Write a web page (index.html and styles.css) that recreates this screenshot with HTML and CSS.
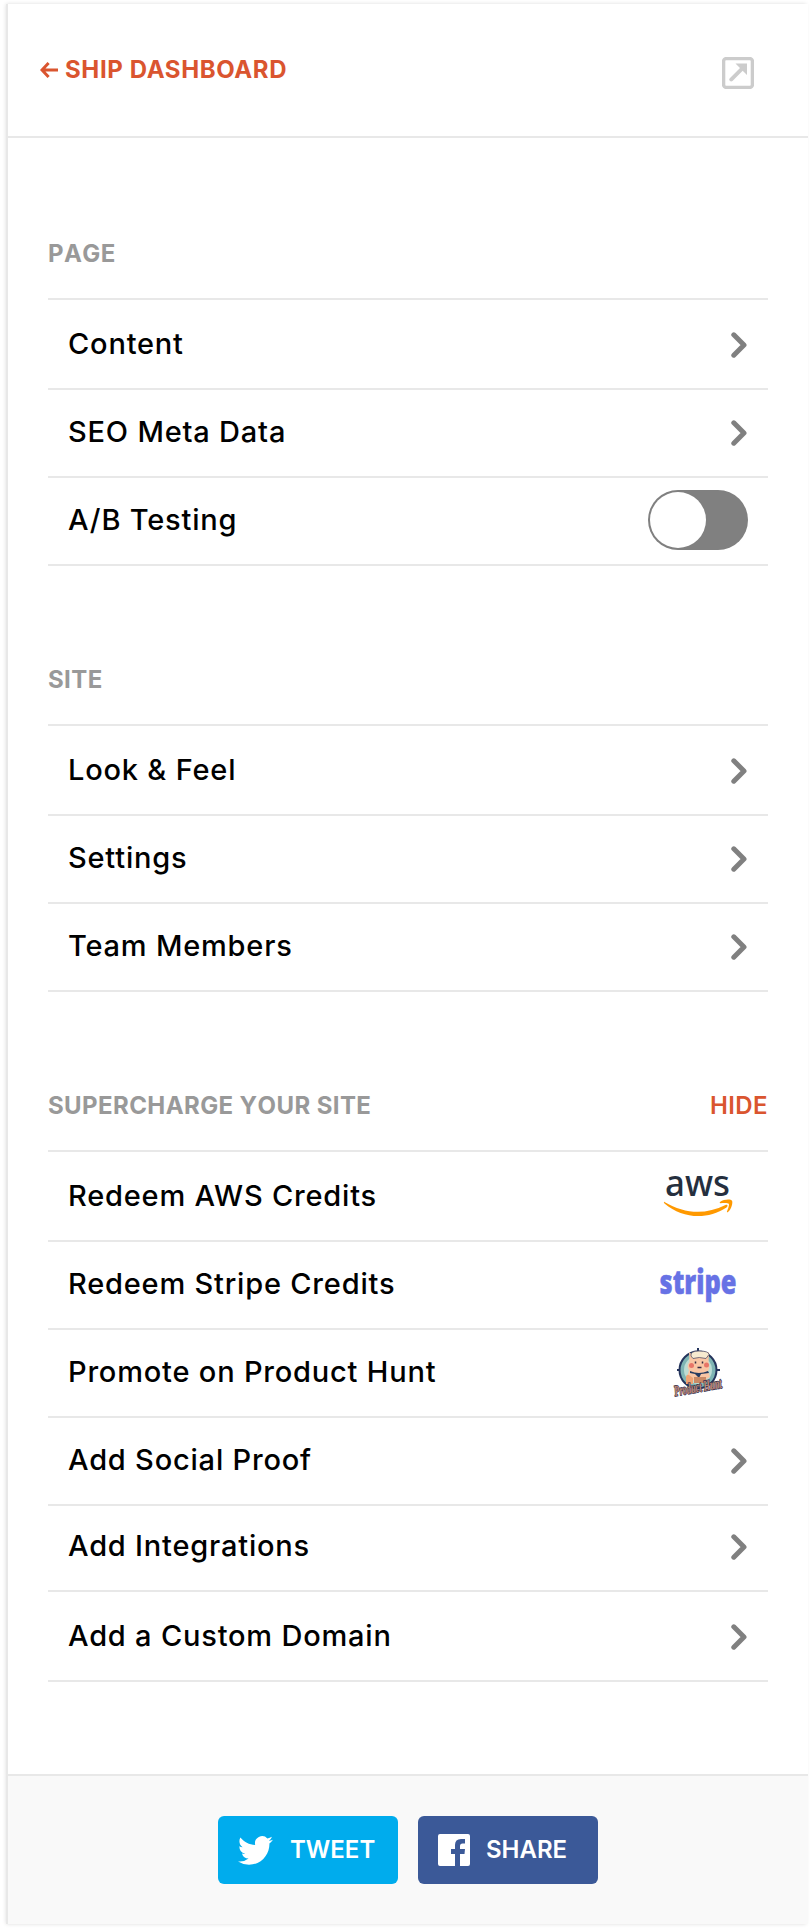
FILE: index.html
```html
<!DOCTYPE html>
<html lang="en">
<head>
<meta charset="utf-8">
<title>Ship Dashboard</title>
<link rel="stylesheet" href="styles.css">
</head>
<body>
<svg class="defs" aria-hidden="true">
  <symbol id="chevron" viewBox="0 0 16 26"><path d="M2.800 2.800L13 13 2.800 23.200" fill="none" stroke="#808080" stroke-width="5" stroke-linecap="round" stroke-linejoin="round"/></symbol>
</svg>
<div class="panel">
  <header class="header">
    <a class="back"><svg class="arrow" width="18" height="16" viewBox="0 0 18 16"><path d="M8.600 1L2 8l6.600 7M2 8h16" fill="none" stroke="#da552f" stroke-width="3"/></svg><span>SHIP DASHBOARD</span></a>
    <svg class="open" width="32" height="32" viewBox="0 0 32 32"><rect x="1.600" y="1.600" width="28.800" height="28.800" rx="2.500" fill="none" stroke="#ccc" stroke-width="3.400"/><path d="M13.500 6.500H25V18l-4.300-4.300L10.500 24q-1.500 1-2.800-.3T8 21L18 11z" fill="#ccc"/></svg>
  </header>
  <main class="content">
    <section class="section">
      <div class="heading"><h2>PAGE</h2></div>
      <ul class="list">
        <li class="row first"><span>Content</span><svg class="chevron"><use href="#chevron"/></svg></li>
        <li class="row"><span>SEO Meta Data</span><svg class="chevron"><use href="#chevron"/></svg></li>
        <li class="row"><span>A/B Testing</span><div class="toggle"><div class="knob"></div></div></li>
      </ul>
    </section>
    <section class="section">
      <div class="heading"><h2>SITE</h2></div>
      <ul class="list">
        <li class="row first"><span>Look &amp; Feel</span><svg class="chevron"><use href="#chevron"/></svg></li>
        <li class="row"><span>Settings</span><svg class="chevron"><use href="#chevron"/></svg></li>
        <li class="row"><span>Team Members</span><svg class="chevron"><use href="#chevron"/></svg></li>
      </ul>
    </section>
    <section class="section">
      <div class="heading"><h2>SUPERCHARGE YOUR SITE</h2><a class="hide">HIDE</a></div>
      <ul class="list">
        <li class="row first"><span>Redeem AWS Credits</span>
          <svg class="logo" width="100" height="60" viewBox="0 0 100 60"><text x="17" y="30" class="aws" textLength="65" lengthAdjust="spacingAndGlyphs">aws</text><path d="M16.500 36c20 12 41 13 61 3 2-1 3 1 1 2.500-20 13-44 11-62-4-1-1-.6-2 0-1.500z" fill="#f90"/><path d="M72 36c4-3 11-3 12-1.300s-.3 8-4 11.300c-.7.500-1.400.2-1-.5 1-2.500 2.500-6.500 1.800-7.700s-5.500-.8-8.300-.6c-.9.1-1-.7-.5-1.200z" fill="#f90"/></svg></li>
        <li class="row"><span>Redeem Stripe Credits</span>
          <svg class="logo" width="100" height="60" viewBox="0 0 100 60"><text x="11.500" y="39.500" class="stripe" textLength="77" lengthAdjust="spacingAndGlyphs">stripe</text></svg></li>
        <li class="row"><span>Promote on Product Hunt</span>
          <svg class="logo" width="100" height="60" viewBox="0 0 100 60">
            <circle cx="50" cy="28" r="18.500" fill="#7fb5b4" stroke="#24345c" stroke-width="2"/>
            <circle cx="50" cy="28" r="14" fill="#bcdcd3"/>
            <path d="M29 28h3M68 28h4M50 6v4" stroke="#24345c" stroke-width="2"/>
            <path d="M41.500 20L41 10l5 4h9l6-4-.5 11q2 4-.5 8l2 6q-12 7-23 1l2-8q-3-4 .5-8z" fill="#f9c6a4"/>
            <path d="M43 14q-1-5 8-5 10 0 10 3.500l-3 4q-7-2-13 0z" fill="#f7ead0" stroke="#57536b" stroke-width=".8"/>
            <circle cx="43.500" cy="23.500" r="2.500" fill="#e87568"/><circle cx="58.500" cy="23" r="2.500" fill="#e87568"/>
            <path d="M47.500 19.500v2M54.500 19.500v2M49.500 25.500h4" stroke="#342940" stroke-width="1.500"/>
            <path d="M42 29q9 4 18 0l1 2-8 1-2 4-4-4-5-1z" fill="#263b60"/>
            <path d="M38 36q0-4 3-3l4 3v6h-7z" fill="#f0a374"/>
            <path d="M46 35h12v6H46z" fill="#c98a66"/>
            <g transform="rotate(-10 50 46)"><text x="26" y="50" class="hunt" textLength="48" lengthAdjust="spacingAndGlyphs">Product Hunt</text></g>
          </svg></li>
        <li class="row"><span>Add Social Proof</span><svg class="chevron"><use href="#chevron"/></svg></li>
        <li class="row short"><span>Add Integrations</span><svg class="chevron"><use href="#chevron"/></svg></li>
        <li class="row first"><span>Add a Custom Domain</span><svg class="chevron"><use href="#chevron"/></svg></li>
      </ul>
    </section>
  </main>
  <footer class="footer">
    <a class="button tweet"><svg width="35" height="35" viewBox="0 0 24 24"><path fill="#fff" d="M23.950 4.570a10 10 0 0 1-2.820.77 4.960 4.960 0 0 0 2.160-2.720c-.95.55-2 .95-3.130 1.180a4.920 4.920 0 0 0-8.380 4.480C7.690 8.090 4.070 6.130 1.640 3.160a4.820 4.820 0 0 0-.67 2.480c0 1.710.87 3.210 2.190 4.100a4.900 4.900 0 0 1-2.230-.62v.06a4.920 4.920 0 0 0 3.950 4.830 5 5 0 0 1-2.210.08 4.940 4.940 0 0 0 4.600 3.420A9.870 9.870 0 0 1 0 19.540a13.990 13.990 0 0 0 7.550 2.210c9.050 0 14-7.500 14-13.980 0-.21 0-.42-.02-.63a9.940 9.940 0 0 0 2.460-2.550z"/></svg><span>TWEET</span></a>
    <a class="button share"><svg width="32" height="32" viewBox="0 0 32 32"><path fill="#fff" d="M2 0h28q2 0 2 2v28q0 2-2 2h-8V20h4.500l.5-5h-5v-3q0-2.500 2.500-2.500H27V5h-4q-6 0-6 6v4h-4v5h4v12H2q-2 0-2-2V2q0-2 2-2z"/></svg><span>SHARE</span></a>
  </footer>
</div>
</body>
</html>
```
FILE: styles.css
```css
* { box-sizing: border-box; }
body {
  margin: 0;
  padding: 4px 2px 4px 8px;
  height: 1928px;
  background: #fff;
  font-family: Inter, "Liberation Sans", sans-serif;
  overflow: hidden;
}
.defs { display: none; }
.panel {
  height: 1920px;
  display: flex;
  flex-direction: column;
  background: #fff;
  box-shadow: -2px 0 0 #e8e8e8, -2px 0 4px rgba(0, 0, 0, .14);
}
.header {
  height: 134px;
  border-bottom: 2px solid #e8e8e8;
  display: flex;
  justify-content: space-between;
  align-items: flex-start;
  padding: 53px 54px 0 32px;
}
.back {
  display: flex;
  align-items: center;
  gap: 7px;
  margin-top: -2px;
  color: #da552f;
  font-size: 24px;
  line-height: 30px;
  font-weight: 650;
  letter-spacing: .62px;
}
.arrow { margin-top: -1px; }
.content { flex: 1; padding: 0 40px; }
.section { padding-top: 98px; }
.section + .section { padding-top: 96px; }
.heading {
  height: 62px;
  display: flex;
  justify-content: space-between;
  font-size: 24px;
  line-height: 36px;
}
.heading h2 {
  margin: 0;
  font-size: inherit;
  font-weight: 650;
  font-kerning: none;
  letter-spacing: .4px;
  color: #999;
}
.heading .hide { color: #da552f; font-weight: 600; letter-spacing: .4px; }
.list { margin: 0; padding: 0; list-style: none; border-top: 2px solid #e8e8e8; }
.row {
  height: 88px;
  padding: 0 20px 2px;
  border-bottom: 2px solid #e8e8e8;
  display: flex;
  align-items: center;
  justify-content: space-between;
  font-size: 29px;
  line-height: 36px;
  font-weight: 450;
  letter-spacing: .8px;
  color: #000;
}
.row.first { height: 90px; padding-bottom: 0; }
.row.short { height: 86px; padding-bottom: 4px; }
.chevron { width: 16px; height: 26px; margin: 2px 1px 0 0; }
.toggle { width: 100px; height: 60px; padding: 2px; border-radius: 30px; background: #808080; }
.knob { width: 56px; height: 56px; border-radius: 50%; background: #fff; }
.logo { overflow: visible; }
.aws { font: 500 37px "Noto Sans", sans-serif; letter-spacing: 0; fill: #252f3e; }
.stripe {
  font: 800 34px "Open Sans", sans-serif;
  letter-spacing: 0;
  fill: #6772e5;
  stroke: #6772e5;
  stroke-width: .5px;
}
.hunt {
  font: italic 700 15px "Liberation Serif", serif;
  letter-spacing: 0;
  fill: #c18b76;
  stroke: #3b3450;
  stroke-width: 1.6px;
  paint-order: stroke;
}
.footer {
  height: 150px;
  padding-top: 40px;
  border-top: 2px solid #e8e8e8;
  background: #f9f9f9;
  display: flex;
  justify-content: center;
  gap: 20px;
}
.button {
  width: 180px;
  height: 68px;
  border-radius: 6px;
  padding-left: 20px;
  display: flex;
  align-items: center;
  gap: 17px;
  color: #fff;
  font-size: 24px;
  font-weight: 600;
}
.button span { margin-top: -1px; }
.tweet { background: #00aced; }
.share { background: #3b5998; gap: 16px; }
```
